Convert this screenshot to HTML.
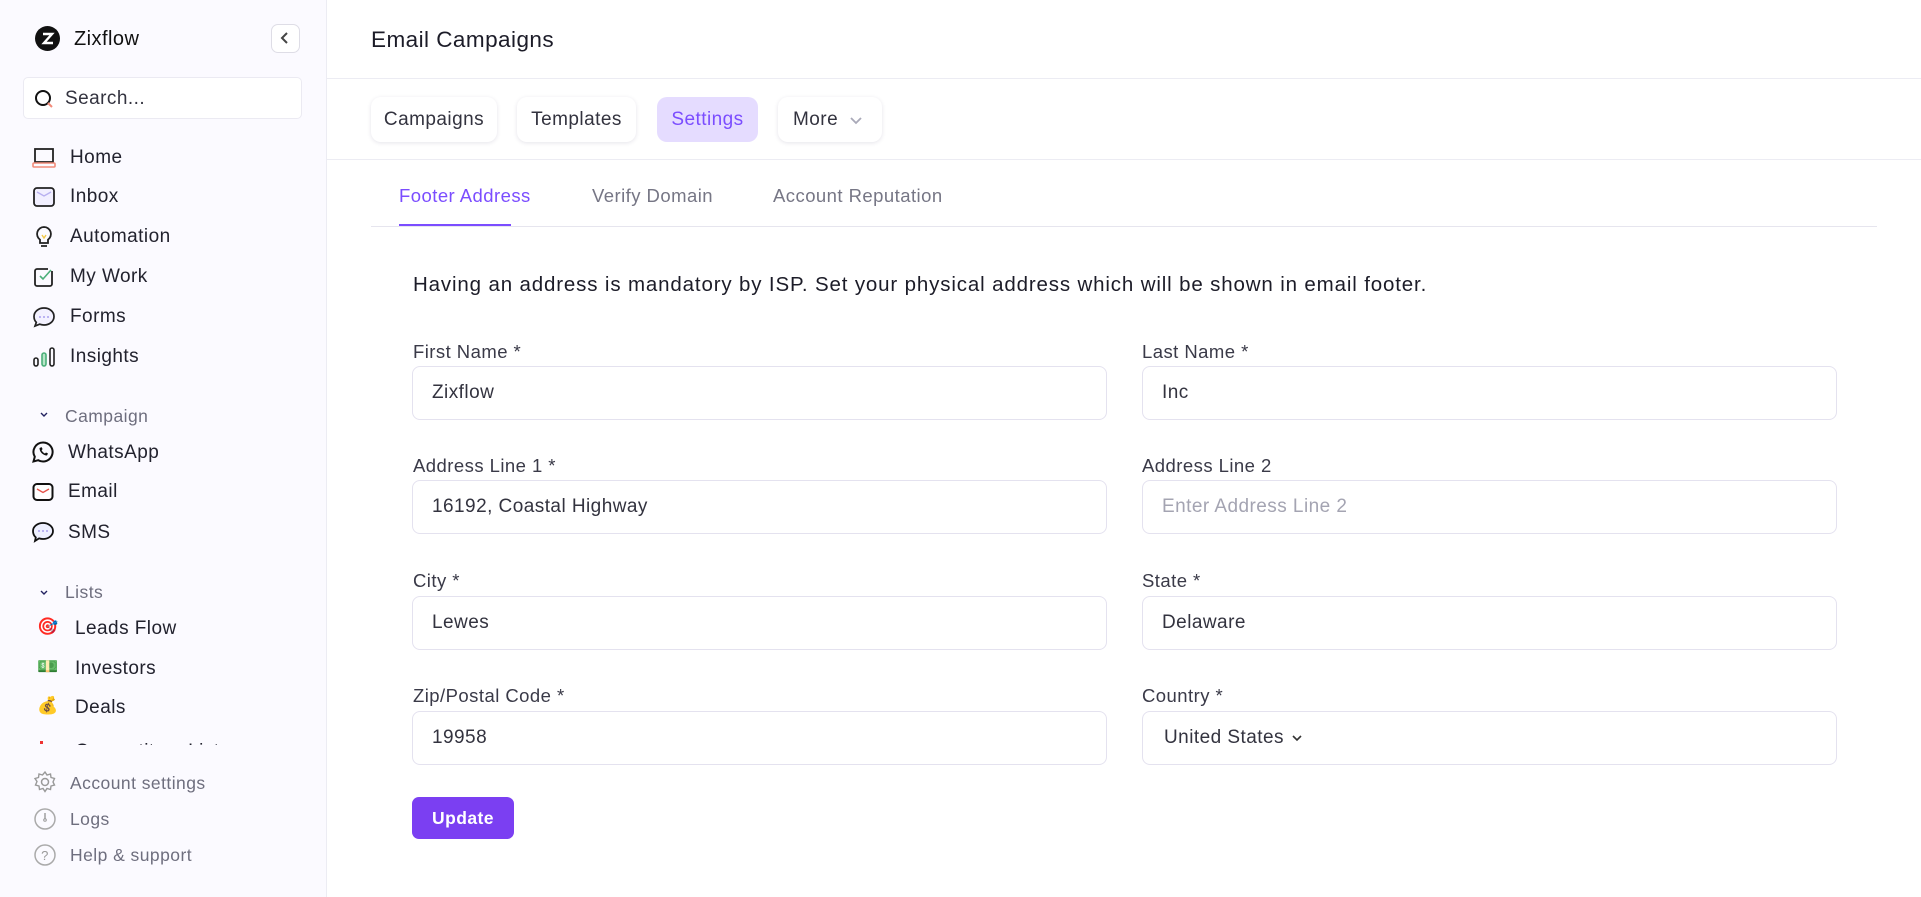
<!DOCTYPE html>
<html><head><meta charset="utf-8"><style>
*{box-sizing:border-box;margin:0;padding:0}
body{width:1921px;height:897px;overflow:hidden;font-family:"Liberation Sans",sans-serif;background:#fff;color:#2b2b3a;position:relative;letter-spacing:0.45px}
.sb{position:absolute;left:0;top:0;width:327px;height:897px;background:#fbfaff;border-right:1px solid #ececf3}
.a{position:absolute}
.nav{position:absolute;left:70px;font-size:19px;color:#22222e;line-height:22px}
.ic{position:absolute;left:32px;width:24px;height:24px}
.gray{color:#6e6e7e}
.main{position:absolute;left:327px;top:0;right:0;height:897px}
.tb{position:absolute;top:97px;height:45px;border-radius:10px;background:#fff;box-shadow:0 1px 4px rgba(40,30,80,.12);font-size:19px;line-height:45px;text-align:center;color:#33333f}
.lbl{position:absolute;font-size:18.5px;color:#3a3a48}
.in{position:absolute;height:54px;border:1px solid #e4e2ef;border-radius:8px;background:#fff;font-size:19px;line-height:52px;padding-left:19px;color:#33333f}
</style></head><body>
<div class="sb">
 <svg class="a" style="left:35px;top:26px" width="25" height="25" viewBox="0 0 25 25"><circle cx="12.5" cy="12.5" r="12.5" fill="#111"/><path d="M8 8h9l-8 9h9" stroke="#fff" stroke-width="2.4" fill="none"/></svg>
 <div class="a" style="left:74px;top:28px;font-size:20px;color:#111">Zixflow</div>
 <div class="a" style="left:271px;top:24px;width:29px;height:29px;border:1.5px solid #dedde6;border-radius:7px;background:#fff"><svg width="26" height="26" viewBox="0 0 26 26"><path d="M15 8l-5 5 5 5" stroke="#444" stroke-width="2" fill="none"/></svg></div>
 <div class="a" style="left:23px;top:77px;width:279px;height:42px;border:1px solid #ebeaf2;border-radius:5px;background:#fff"></div>
 <svg class="a" style="left:33px;top:88px" width="24" height="24" viewBox="0 0 24 24"><circle cx="10" cy="10" r="7" stroke="#111" stroke-width="2" fill="none"/><path d="M15 15l4 4" stroke="#f28b7a" stroke-width="2"/></svg>
 <div class="a" style="left:65px;top:88px;font-size:19px;color:#33333f">Search...</div>

 <svg class="ic" style="top:146px" viewBox="0 0 24 24"><rect x="3" y="3" width="18" height="13" stroke="#222" stroke-width="1.8" fill="none"/><rect x="1" y="17" width="22" height="4" rx="1" stroke="#f28b7a" stroke-width="1.6" fill="none"/></svg>
 <div class="nav" style="top:147px">Home</div>
 <svg class="ic" style="top:185px" viewBox="0 0 24 24"><rect x="2" y="3" width="20" height="18" rx="3" stroke="#222" stroke-width="1.8" fill="#f1efff"/><path d="M5 7l7 4 7-4" stroke="#b8b0f0" stroke-width="1.4" fill="none"/></svg>
 <div class="nav" style="top:186px">Inbox</div>
 <svg class="ic" style="top:225px" viewBox="0 0 24 24"><path d="M12 2a7 7 0 0 0-4 12.7V18h8v-3.3A7 7 0 0 0 12 2zM9 21h6" stroke="#222" stroke-width="1.8" fill="none"/><path d="M10 10l2 3 2-3" stroke="#f2c94c" stroke-width="1.4" fill="none"/></svg>
 <div class="nav" style="top:226px">Automation</div>
 <svg class="ic" style="top:265px" viewBox="0 0 24 24"><path d="M20 6v13a2 2 0 0 1-2 2H5a2 2 0 0 1-2-2V6a2 2 0 0 1 2-2h11" stroke="#222" stroke-width="1.8" fill="none"/><path d="M8 11l3 3 8-9" stroke="#4caf7a" stroke-width="1.6" fill="none"/></svg>
 <div class="nav" style="top:266px">My Work</div>
 <svg class="ic" style="top:305px" viewBox="0 0 24 24"><path d="M12 3c5.5 0 10 3.6 10 8.5S17.5 20 12 20c-1.6 0-3-.3-4.3-.8L3 21l1.3-3.6C2.8 15.9 2 13.8 2 11.5 2 6.6 6.5 3 12 3z" stroke="#222" stroke-width="1.7" fill="#f3f1ff"/><circle cx="8" cy="12" r="1" fill="#a9a0ee"/><circle cx="12" cy="12" r="1" fill="#a9a0ee"/><circle cx="16" cy="12" r="1" fill="#a9a0ee"/></svg>
 <div class="nav" style="top:306px">Forms</div>
 <svg class="ic" style="top:345px" viewBox="0 0 24 24"><rect x="2" y="13" width="4" height="8" rx="2" stroke="#222" stroke-width="1.6" fill="none"/><rect x="10" y="8" width="4" height="13" rx="2" stroke="#4caf7a" stroke-width="1.6" fill="#b7e6c8"/><rect x="18" y="3" width="4" height="18" rx="2" stroke="#222" stroke-width="1.6" fill="none"/></svg>
 <div class="nav" style="top:346px">Insights</div>

 <svg class="a" style="left:38px;top:408px" width="12" height="12" viewBox="0 0 12 12"><path d="M3 5l3 3 3-3" stroke="#222260" stroke-width="1.4" fill="none"/></svg>
 <div class="nav gray" style="left:65px;top:405px;font-size:17.5px">Campaign</div>
 <svg class="ic" style="top:440px;left:31px" viewBox="0 0 24 24"><path d="M12 2.5a9.5 9.5 0 0 0-8.2 14.3L2.5 21.5l4.8-1.3A9.5 9.5 0 1 0 12 2.5z" stroke="#111" stroke-width="2" fill="none"/><path d="M8.5 8c0 4 3.5 7.5 7.5 7.5l1-2-2-1-1 1c-1.5-.6-2.8-1.9-3.4-3.4l1-1-1-2z" fill="#111"/></svg>
 <div class="nav" style="top:442px;left:68px">WhatsApp</div>
 <svg class="ic" style="top:480px;left:31px" viewBox="0 0 24 24"><rect x="2.5" y="4" width="19" height="16" rx="3.5" stroke="#111" stroke-width="2" fill="#fff"/><path d="M6 9l6 3.5L18 9" stroke="#e5534b" stroke-width="1.4" fill="none"/></svg>
 <div class="nav" style="top:481px;left:68px">Email</div>
 <svg class="ic" style="top:520px;left:31px" viewBox="0 0 24 24"><path d="M12 3c5.5 0 10 3.6 10 8s-4.5 8-10 8c-1.4 0-2.7-.2-3.9-.6L4 21l.8-3.6C3 15.9 2 14 2 11c0-4.4 4.5-8 10-8z" stroke="#111" stroke-width="1.8" fill="#eef0ff"/><circle cx="8" cy="11" r="1" fill="#a9a0ee"/><circle cx="12" cy="11" r="1" fill="#a9a0ee"/><circle cx="16" cy="11" r="1" fill="#a9a0ee"/></svg>
 <div class="nav" style="top:522px;left:68px">SMS</div>

 <svg class="a" style="left:38px;top:586px" width="12" height="12" viewBox="0 0 12 12"><path d="M3 5l3 3 3-3" stroke="#222260" stroke-width="1.4" fill="none"/></svg>
 <div class="nav gray" style="left:65px;top:581px;font-size:17.5px">Lists</div>
 <div class="a" style="left:37px;top:617px;font-size:17px">🎯</div>
 <div class="nav" style="top:618px;left:75px">Leads Flow</div>
 <div class="a" style="left:37px;top:657px;font-size:17px">💵</div>
 <div class="nav" style="top:658px;left:75px">Investors</div>
 <div class="a" style="left:37px;top:696px;font-size:17px">💰</div>
 <div class="nav" style="top:697px;left:75px">Deals</div>
 <div class="a" style="left:0;top:740px;width:326px;height:5px;overflow:hidden"><div class="nav" style="left:75px;top:1px">Competitors List</div><div class="a" style="left:40px;top:1px;width:3px;height:3px;background:#e33"></div></div>

 <svg class="ic" style="top:770px;left:33px" viewBox="0 0 24 24"><circle cx="12" cy="12" r="3.5" stroke="#999" stroke-width="1.5" fill="none"/><path d="M12 2l2 3 3.5-1 .5 3.5 3.5 1-1.5 3.5 1.5 3-3.5 1-.5 3.5-3.5-1-2 3-2-3-3.5 1-.5-3.5-3.5-1 1.5-3.5L2 8.5l3.5-1L6 4l3.5 1z" stroke="#999" stroke-width="1.4" fill="none"/></svg>
 <div class="nav gray" style="top:772px;font-size:17.5px">Account settings</div>
 <svg class="ic" style="top:807px;left:33px" viewBox="0 0 24 24"><circle cx="12" cy="12" r="10" stroke="#aaa" stroke-width="1.5" fill="none"/><path d="M12 6v6" stroke="#999" stroke-width="1.4"/><circle cx="12" cy="13" r="1.3" stroke="#999" fill="none"/></svg>
 <div class="nav gray" style="top:808px;font-size:17.5px">Logs</div>
 <svg class="ic" style="top:843px;left:33px" viewBox="0 0 24 24"><circle cx="12" cy="12" r="10" stroke="#aaa" stroke-width="1.5" fill="none"/><text x="12" y="17" font-size="13" text-anchor="middle" fill="#999" font-family="Liberation Sans">?</text></svg>
 <div class="nav gray" style="top:844px;font-size:17.5px">Help &amp; support</div>
</div>

<div class="main">
 <div class="a" style="left:44px;top:27px;font-size:22.5px;color:#1c1c28">Email Campaigns</div>
 <div class="a" style="left:0;right:0;top:78px;height:1px;background:#ececf3"></div>
 <div class="tb" style="left:44px;width:126px">Campaigns</div>
 <div class="tb" style="left:190px;width:119px">Templates</div>
 <div class="tb" style="left:330px;width:101px;background:#e5dcff;color:#7b4dff;box-shadow:none">Settings</div>
 <div class="tb" style="left:451px;width:104px;text-align:left;padding-left:15px">More <svg style="position:absolute;left:70px;top:15px" width="16" height="16" viewBox="0 0 16 16"><path d="M3 6l5 5 5-5" stroke="#a9a9b8" stroke-width="1.8" fill="none"/></svg></div>
 <div class="a" style="left:0;right:0;top:159px;height:1px;background:#ececf3"></div>
 <div class="a" style="left:72px;top:185px;font-size:18.5px;color:#7b4dff">Footer Address</div>
 <div class="a" style="left:265px;top:185px;font-size:18.5px;color:#767685">Verify Domain</div>
 <div class="a" style="left:446px;top:185px;font-size:18.5px;color:#767685">Account Reputation</div>
 <div class="a" style="left:44px;width:1506px;top:226px;height:1px;background:#e6e5ee"></div>
 <div class="a" style="left:72px;width:112px;top:224px;height:2px;background:#7b4dff"></div>
 <div class="a" style="left:86px;top:273px;font-size:20.5px;color:#1c1c28;letter-spacing:0.85px">Having an address is mandatory by ISP. Set your physical address which will be shown in email footer.</div>

 <div class="lbl" style="left:86px;top:341px">First Name *</div>
 <div class="in" style="left:85px;top:366px;width:695px">Zixflow</div>
 <div class="lbl" style="left:815px;top:341px">Last Name *</div>
 <div class="in" style="left:815px;top:366px;width:695px">Inc</div>

 <div class="lbl" style="left:86px;top:455px">Address Line 1 *</div>
 <div class="in" style="left:85px;top:480px;width:695px">16192, Coastal Highway</div>
 <div class="lbl" style="left:815px;top:455px">Address Line 2</div>
 <div class="in" style="left:815px;top:480px;width:695px;color:#a4a4b2">Enter Address Line 2</div>

 <div class="lbl" style="left:86px;top:570px">City *</div>
 <div class="in" style="left:85px;top:596px;width:695px">Lewes</div>
 <div class="lbl" style="left:815px;top:570px">State *</div>
 <div class="in" style="left:815px;top:596px;width:695px">Delaware</div>

 <div class="lbl" style="left:86px;top:685px">Zip/Postal Code *</div>
 <div class="in" style="left:85px;top:711px;width:695px">19958</div>
 <div class="lbl" style="left:815px;top:685px">Country *</div>
 <div class="in" style="left:815px;top:711px;width:695px;padding-left:21px">United States <svg style="vertical-align:middle" width="14" height="14" viewBox="0 0 14 14"><path d="M3 5l4 4 4-4" stroke="#333" stroke-width="1.6" fill="none"/></svg></div>

 <div class="a" style="left:85px;top:797px;width:102px;height:42px;background:#7b3ff2;border-radius:7px;color:#fff;font-size:17.5px;font-weight:bold;text-align:center;line-height:42px">Update</div>
</div>
</body></html>
